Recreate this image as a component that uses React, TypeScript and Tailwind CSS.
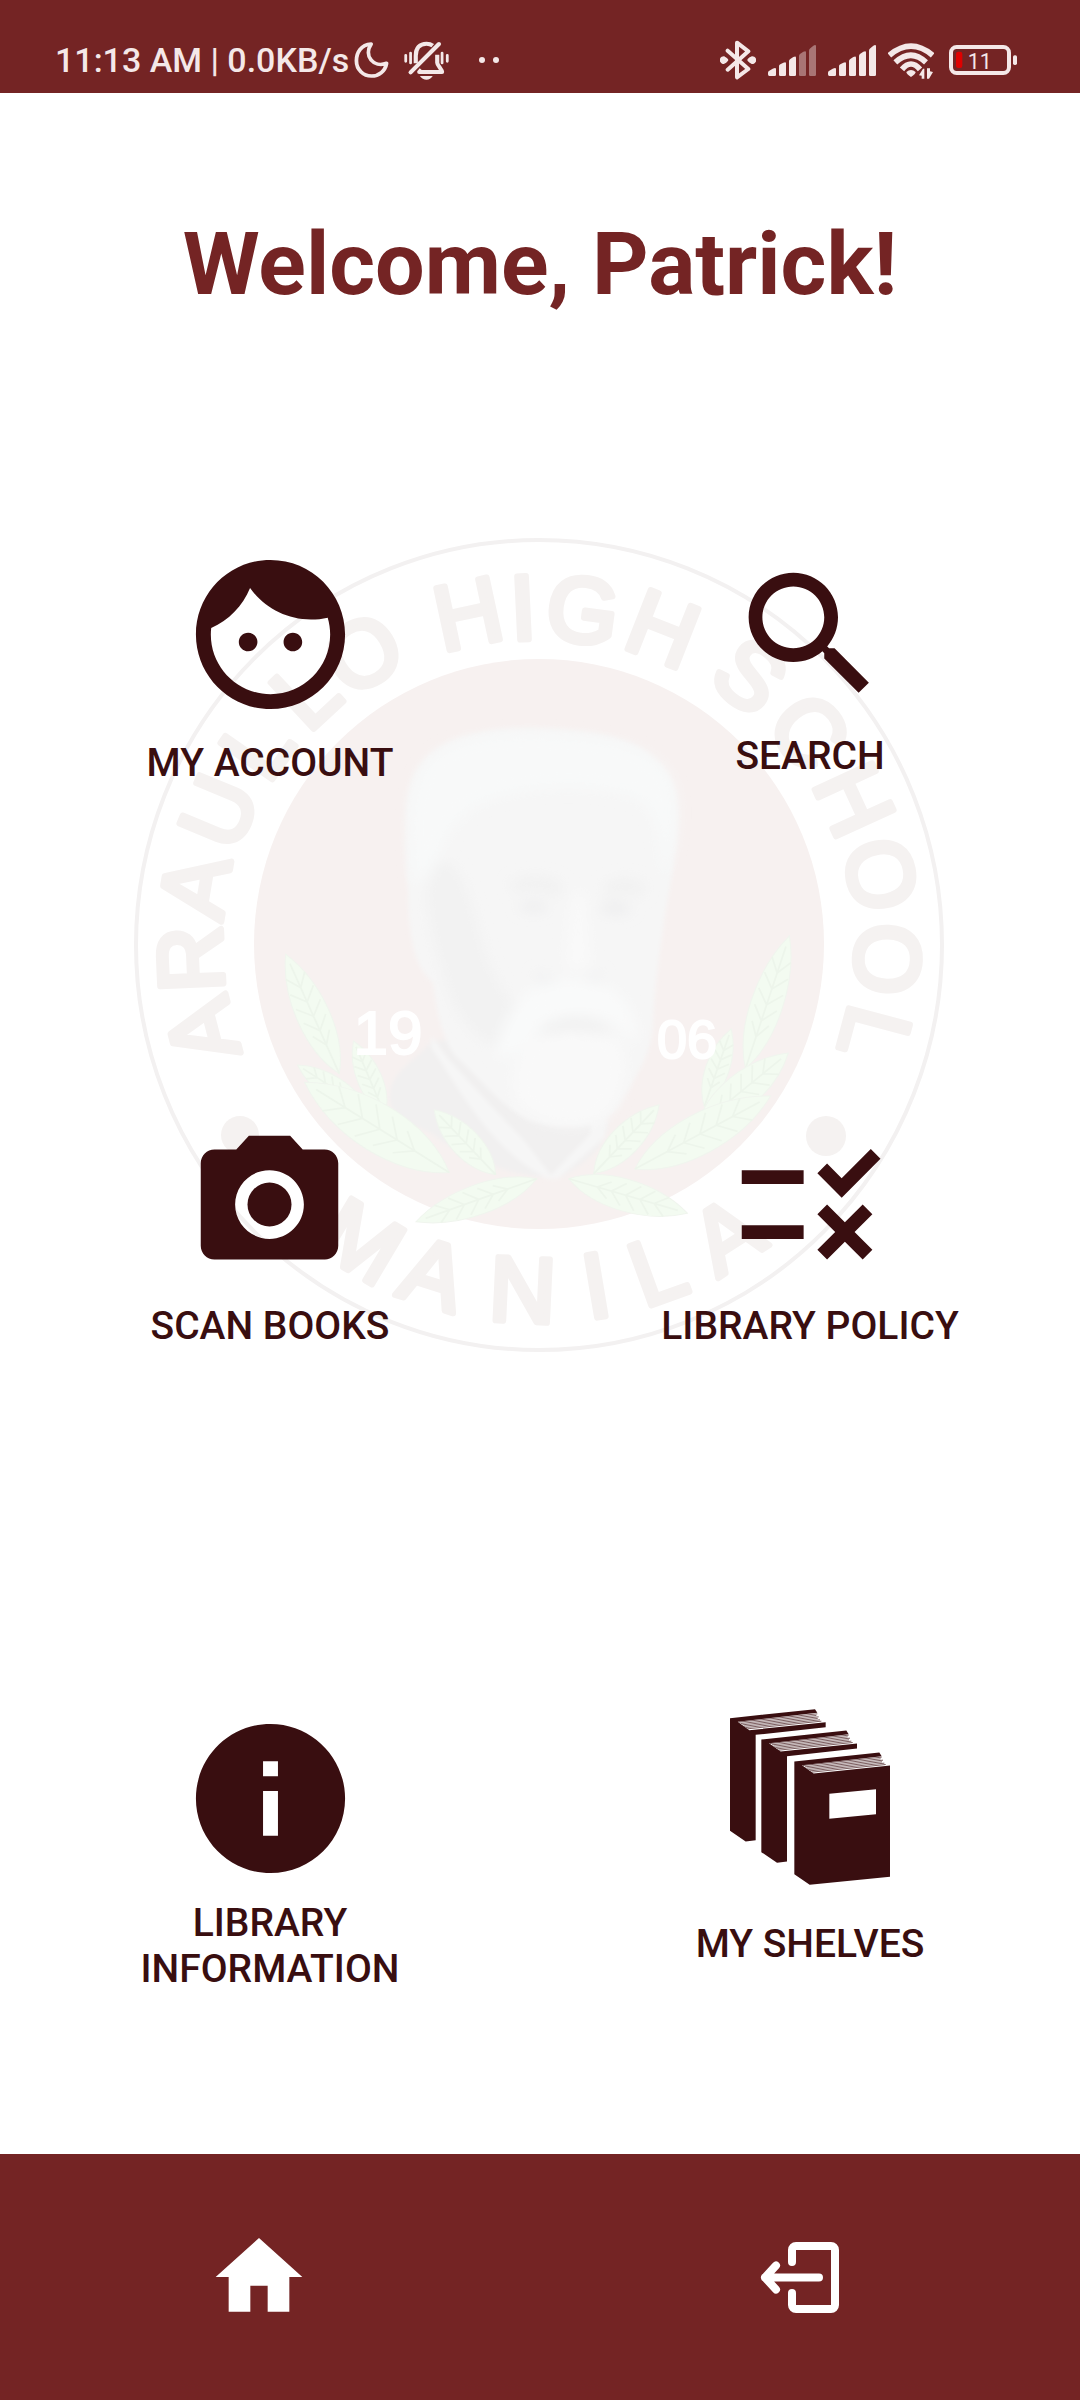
import type { ReactNode } from "react";

type IconProps = { className?: string };

/* ---------- Status bar ---------- */

function MoonIcon() {
  return (
    <svg className="h-10 w-[37px]" viewBox="1027 120 108 120" preserveAspectRatio="none" fill="none" stroke="currentColor" strokeWidth="11" strokeLinejoin="round" aria-hidden="true">
      <path d="M1080 132C1050 134 1037 158 1037 182c0 27 20 46 44 46 22 0 40-15 44-38-38 14-68-22-45-58z" />
    </svg>
  );
}

function MutedBellIcon() {
  return (
    <svg className="h-10 w-[45px]" viewBox="1175 120 130 120" preserveAspectRatio="none" fill="none" stroke="currentColor" aria-hidden="true">
      <path strokeWidth="12" d="M1209 190v-23c0-24 12-36 31-36 7 0 13 2 18 6M1271 164v24c0 8 14 20 14 28h-66l6-7" strokeLinejoin="round" />
      <path strokeWidth="12" strokeLinecap="round" d="M1194 217l82-85" />
      <path strokeWidth="8" strokeLinecap="round" d="M1180 166v18M1194 159v30M1285 159v30M1300 166v18" />
      <path fill="currentColor" stroke="none" d="M1221 228h37c-4 7-11 11-18 11s-15-4-19-11z" />
    </svg>
  );
}

function BluetoothIcon() {
  return (
    <svg className="h-10 w-9" viewBox="174 120 108 120" fill="none" stroke="currentColor" aria-hidden="true">
      <path strokeWidth="12" strokeLinecap="round" strokeLinejoin="round" d="M197 152l62 55-34 25V128l34 26-62 55" />
      <path fill="currentColor" stroke="none" d="M185 169c4 0 14 8 14 11s-10 12-14 12-12-5-12-12 8-11 12-11zM271 169c4 0 12 4 12 11s-8 12-12 12-15-8-15-12 11-11 15-11z" />
    </svg>
  );
}

function SignalIcon({ level }: { level: number }) {
  const bars = [
    "M321 223v-5q0-4 4-6l10-6q10-5 10 1v18q0 3-4 3h-16q-4 0-4-5z",
    "M354 224v-26q0-3 4-5l9-5q8-4 8 2v34q0 4-4 4h-13q-4 0-4-4z",
    "M384 224v-41q0-3 4-6l9-6q8-4 8 2v51q0 4-4 4h-13q-4 0-4-4z",
    "M414 224v-57q0-3 4-6l9-6q8-4 8 2v67q0 4-4 4h-13q-4 0-4-4z",
    "M444 224v-72q0-4 4-7l9-8q8-5 8 2v85q0 4-4 4h-13q-4 0-4-4z",
  ];
  return (
    <svg className="h-10 w-12" viewBox="321 120 144 120" fill="currentColor" aria-hidden="true">
      {bars.map((d, i) => (
        <path key={d} d={d} opacity={i < level ? 1 : 0.42} />
      ))}
    </svg>
  );
}

function WifiIcon() {
  return (
    <svg className="h-10 w-[46px]" viewBox="684 120 138 120" fill="none" stroke="currentColor" strokeWidth="17" aria-hidden="true">
      <path d="M688 166q65-55 130 0M706 187q47-43 92 0M726 208q27-32 54 0" />
      <path fill="currentColor" stroke="none" d="M739 216q14-12 28 0 0 6-14 15-14-9-14-15zM785 236v-9l-8-1 12-20h4v30zM801 205h9v9l9 2-12 20h-6z" />
    </svg>
  );
}

function BatteryIcon() {
  return (
    <svg className="h-10 w-[68px]" viewBox="867 120 204 120" role="img" aria-label="Battery 11%">
      <rect x="873" y="141" width="174" height="78" rx="17" fill="none" stroke="currentColor" strokeWidth="12" />
      <rect x="1059" y="166" width="12" height="29" rx="5" fill="currentColor" />
      <rect x="888" y="155" width="19" height="49" rx="7" fill="#df0000" />
      <text x="959" y="206" textAnchor="middle" fontSize="64" fill="currentColor">11</text>
    </svg>
  );
}

function StatusBar() {
  return (
    <header className="flex h-[93px] items-center justify-between bg-[#742424] pt-[27px] pr-[63px] pl-[55px] text-[#f4e8e8]">
      <div className="flex items-center">
        <span className="text-[34px] leading-10 font-medium whitespace-nowrap">11:13 AM | 0.0KB/s</span>
        <span className="ml-1 flex items-center gap-3.5">
          <MoonIcon />
          <MutedBellIcon />
        </span>
        <span className="ml-[30px] flex gap-2">
          <i className="size-1.5 rounded-full bg-current" />
          <i className="size-1.5 rounded-full bg-current" />
        </span>
      </div>
      <div className="flex items-center gap-[15px]">
        <div className="flex items-center gap-3">
          <BluetoothIcon />
          <SignalIcon level={3} />
          <SignalIcon level={5} />
          <WifiIcon />
        </div>
        <BatteryIcon />
      </div>
    </header>
  );
}

/* ---------- School seal watermark ---------- */

const topLetters: [string, number][] = [
  ["A", -104.5], ["R", -92.5], ["A", -80.5], ["U", -67.5], ["L", -55], ["L", -43], ["O", -31.2],
  ["H", -12.1], ["I", -2.7], ["G", 7.5], ["H", 21.5],
  ["S", 38.2], ["C", 51.8], ["H", 65.4], ["O", 78.5], ["O", 92.5], ["L", 105],
];

const bottomLetters: [string, number][] = [
  ["M", 30.8], ["A", 17.7], ["N", 2.7], ["I", -9.5], ["L", -20], ["A", -32.8],
];

/* The lettering ring is slightly wider than it is tall. */
const ringSpread = (angle: number) => Math.round(12 * Math.sin((angle * Math.PI) / 180) ** 2);

/* Tip x, tip y, base x, base y, half width */
const leaves: [number, number, number, number, number][] = [
  [72, 738, 222, 1085, 62],
  [262, 990, 350, 1205, 46],
  [105, 1060, 300, 1190, 44],
  [125, 1110, 530, 1372, 92],
  [488, 1190, 660, 1378, 54],
  [437, 1515, 775, 1390, 58],
  [1483, 685, 1360, 1070, 60],
  [1320, 955, 1245, 1180, 44],
  [1480, 1025, 1225, 1240, 66],
  [1430, 1150, 1050, 1362, 78],
  [1118, 1175, 935, 1375, 56],
  [1197, 1490, 865, 1390, 62],
];

function Leaf({ leaf }: { leaf: [number, number, number, number, number] }) {
  const [tx, ty, bx, by, w] = leaf;
  const dx = bx - tx;
  const dy = by - ty;
  const len = Math.hypot(dx, dy);
  const angle = (Math.atan2(dy, dx) * 180) / Math.PI;
  const veins = [0.28, 0.4, 0.52, 0.64, 0.76].map((t) => {
    const x = t * len;
    const v = w * 0.6 * Math.sin(Math.PI * Math.min(t, 0.8));
    return `M${x} 0l${-len * 0.1} ${-v}M${x} 0l${-len * 0.1} ${v}`;
  });
  return (
    <g transform={`translate(${tx} ${ty}) rotate(${angle})`}>
      <path d={`M0 0C${len * 0.3} ${-w} ${len * 0.75} ${-w} ${len} 0C${len * 0.75} ${w} ${len * 0.3} ${w} 0 0z`} fill="#f3fbf1" stroke="#f0f5ee" strokeWidth="3" />
      <path d={`M${len * 0.08} 0H${len}${veins.join("")}`} fill="none" stroke="#edf5eb" strokeWidth="5" />
    </g>
  );
}

function SchoolSeal({ className }: IconProps) {
  return (
    <svg className={className} viewBox="130 535 820 820" aria-hidden="true">
      <defs>
        <filter id="soft" x="-20%" y="-20%" width="140%" height="140%">
          <feGaussianBlur stdDeviation="18" />
        </filter>
        <filter id="edge" x="-10%" y="-10%" width="120%" height="120%">
          <feGaussianBlur stdDeviation="6" />
        </filter>
      </defs>
      <ellipse cx="539" cy="945" rx="403" ry="405" fill="none" stroke="#f3f1f1" strokeWidth="4" />
      <circle cx="539" cy="944" r="285" fill="#f7f1f0" />
      <g fill="#f5f2f1" stroke="#f5f2f1" strokeWidth="6" strokeLinejoin="round" fontFamily="'Liberation Sans', Arial, sans-serif" fontSize="92" textAnchor="middle">
        {topLetters.map(([letter, angle], i) => (
          <text key={i} transform={`rotate(${angle} 539 944)`} x="539" y={639 - ringSpread(angle)}>{letter}</text>
        ))}
        {bottomLetters.map(([letter, angle], i) => (
          <text key={i} transform={`rotate(${angle} 539 944)`} x="539" y="1322">{letter}</text>
        ))}
      </g>
      <circle cx="240" cy="1135" r="19" fill="#f5f2f1" />
      <circle cx="826" cy="1136" r="20" fill="#f5f2f1" />

      <g transform="translate(260 700) scale(0.357 0.3444)">
        <g filter="url(#edge)">
          <path d="M480 990C440 1050 350 1080 365 1170c20 80 90 60 130 100 90 60 180 100 290 115h60c60-40 140-90 130-180l40-250z" fill="#f1f0f0" />
          <path d="M790 83C640 78 500 100 440 200 395 270 405 430 415 560c0 110 15 220 70 260 10 90 30 190 80 230 60 60 110 130 190 170 80 30 200 30 250-40 30-60 90-140 95-230 5-120 20-220 35-330 25-150 60-310 10-400C1080 110 960 90 790 83z" fill="#f6f6f6" />
          <path d="M480 975l45 65 115 130 100 110 75 100 110-120 10-70 40 20-10 60-130 120h-30C640 1300 560 1130 480 1010z" fill="#f6f6f6" />
        </g>
        <g filter="url(#soft)">
          <path d="M790 100C620 95 500 120 450 210c-40 80-30 200-20 320l60-20c20-120 70-200 180-230 150-40 300-30 400 10 50 60 50 130 60 230 40-120 50-240 10-310C1080 130 960 105 790 100z" fill="#f8f9f9" />
          <path d="M490 480c70-60 110 140 140 250s90 160 120 180l-40 100c-60 20-150-60-180-160-40-130-90-280-40-370z" fill="#f2f2f2" />
          <path d="M700 530c60-30 120-20 150 10l-10 30c-50-20-90-20-130-10zM960 540c40-30 90-30 120 0l-10 30c-40-15-70-10-100 0z" fill="#f1f1f1" />
          <path d="M720 600q50-30 90 0-40 30-90 0zM945 605q50-35 100 0-45 35-100 0z" fill="#ededee" />
          <path d="M875 560h35l15 220h-70z" fill="#f9f9f9" />
          <path d="M770 790q100 50 190 0l-10 25q-80 30-170 5z" fill="#eeeeef" />
          <path d="M760 840c60-40 180-40 240 10 40 40 70 110 50 150-30-40-60-70-110-80-80-15-130 0-170 50-40 50-80 80-110 60 10-80 50-150 100-190z" fill="#f9fafa" />
          <path d="M740 1010c40-60 120-60 260-30 50 80 10 200-50 240-90 30-170 10-230-50-20-60-10-110 20-160z" fill="#f9f9f9" />
          <path d="M790 950q90-50 180-5l10 25q-100-25-200 5z" fill="#f0f0f0" />
        </g>
        {leaves.map((leaf, i) => (
          <Leaf key={i} leaf={leaf} />
        ))}
      </g>
      <g fill="#ffffff" stroke="#ffffff" strokeWidth="2" fontFamily="'Liberation Sans', Arial, sans-serif" textAnchor="middle">
        <text x="388" y="1054" fontSize="62">19</text>
        <text x="687" y="1058" fontSize="54">06</text>
      </g>
    </svg>
  );
}

/* ---------- Menu icons ---------- */

function FaceIcon() {
  return (
    <svg className="size-[179px]" viewBox="0 0 24 24" fill="currentColor" aria-hidden="true">
      <path d="M9 11.75c-.69 0-1.25.56-1.25 1.25s.56 1.25 1.25 1.25 1.25-.56 1.25-1.25-.56-1.25-1.25-1.25zm6 0c-.69 0-1.25.56-1.25 1.25s.56 1.25 1.25 1.25 1.25-.56 1.25-1.25-.56-1.25-1.25-1.25zM12 2C6.48 2 2 6.48 2 12s4.48 10 10 10 10-4.48 10-10S17.52 2 12 2zm0 18c-4.41 0-8-3.59-8-8 0-.29.02-.58.05-.86 2.36-1.05 4.23-2.98 5.21-5.37C11.07 8.33 14.05 10 17.42 10c.78 0 1.53-.09 2.25-.26.21.71.33 1.47.33 2.26 0 4.41-3.59 8-8 8z" />
    </svg>
  );
}

function SearchIcon() {
  return (
    <svg className="size-[165px]" viewBox="0 0 24 24" fill="currentColor" aria-hidden="true">
      <path d="M15.5 14h-.79l-.28-.27C15.41 12.59 16 11.11 16 9.5 16 5.91 13.09 3 9.5 3S3 5.91 3 9.5 5.91 16 9.5 16c1.61 0 3.09-.59 4.23-1.57l.27.28v.79l5 4.99L20.49 19l-4.99-5zm-6 0C7.01 14 5 11.99 5 9.5S7.01 5 9.5 5 14 7.01 14 9.5 11.99 14 9.5 14z" />
    </svg>
  );
}

function CameraIcon() {
  return (
    <svg className="size-[165px]" viewBox="0 0 24 24" fill="currentColor" aria-hidden="true">
      <circle cx="12" cy="12" r="3.2" />
      <path d="M9 2L7.17 4H4c-1.1 0-2 .9-2 2v12c0 1.1.9 2 2 2h16c1.1 0 2-.9 2-2V6c0-1.1-.9-2-2-2h-3.17L15 2H9zm3 15c-2.76 0-5-2.24-5-5s2.24-5 5-5 5 2.24 5 5-2.24 5-5 5z" />
    </svg>
  );
}

function RuleIcon() {
  return (
    <svg className="size-[165px]" viewBox="0 0 24 24" fill="currentColor" aria-hidden="true">
      <path d="M16.54 11L13 7.46l1.41-1.41 2.12 2.12 4.24-4.24 1.41 1.41L16.54 11zM11 7H2v2h9V7zm10 6.41L19.59 12 17 14.59 14.41 12 13 13.41 15.59 16 13 18.59 14.41 20 17 17.41 19.59 20 21 18.59 18.41 16 21 13.41zM11 15H2v2h9v-2z" />
    </svg>
  );
}

function InfoIcon() {
  return (
    <svg className="size-[179px]" viewBox="0 0 24 24" fill="currentColor" aria-hidden="true">
      <path d="M12 2C6.48 2 2 6.48 2 12s4.48 10 10 10 10-4.48 10-10S17.52 2 12 2zm1 15h-2v-6h2v6zm0-8h-2V7h2v2z" />
    </svg>
  );
}

const pageEdges =
  "M116 96L352 71M122 100L349 76M127 104L356 80M132 108L353 85M137 112L360 89M142 116L364 93";

function BooksIcon() {
  const backBook = "M90 84L345 57l7 11L113 95l35 25 229-24v15l-210 23v316l-30 4-47-32z";
  return (
    <svg className="h-44 w-40" viewBox="90 57 480 527" fill="currentColor" aria-hidden="true">
      <path d={backBook} />
      <path d={pageEdges} stroke="currentColor" strokeWidth="2" />
      <g transform="translate(94 64)">
        <path d={backBook} />
        <path d={pageEdges} stroke="currentColor" strokeWidth="2" />
      </g>
      <g transform="translate(193 130)">
        <path fillRule="evenodd" d="M90 84L345 57l7 11L113 95l35 25 229-24v334l-241 24-46-32zM195 181v75l140-14v-75z" />
        <path d={pageEdges} stroke="currentColor" strokeWidth="2" />
      </g>
    </svg>
  );
}

/* ---------- Page ---------- */

function MenuItem({ icon, label, gap = "gap-4" }: { icon: ReactNode; label: string; gap?: string }) {
  return (
    <button type="button" className={`flex max-w-[320px] flex-col items-center justify-self-center ${gap}`}>
      {icon}
      <span className="text-[39px] leading-[46px] font-medium">{label}</span>
    </button>
  );
}

export default function App() {
  return (
    <div className="flex min-h-screen flex-col bg-white font-['Roboto',sans-serif]">
      <StatusBar />
      <main className="relative flex-1 pt-[119px] pb-10 text-[#390e10]">
        <SchoolSeal className="pointer-events-none absolute top-[442px] left-1/2 w-[820px] -translate-x-1/2" />
        <div className="relative">
          <h1 className="text-center text-[88px] leading-[103px] font-bold text-[#742424]">Welcome, Patrick!</h1>
          <nav aria-label="Library menu" className="mt-[230px]">
            <div className="grid grid-cols-2 items-center">
              <MenuItem icon={<FaceIcon />} label="MY ACCOUNT" />
              <MenuItem icon={<SearchIcon />} label="SEARCH" />
            </div>
            <div className="mt-[336px] grid grid-cols-2 items-center">
              <MenuItem icon={<CameraIcon />} label="SCAN BOOKS" />
              <MenuItem icon={<RuleIcon />} label="LIBRARY POLICY" />
            </div>
            <div className="mt-[360px] grid grid-cols-2 items-start">
              <MenuItem icon={<InfoIcon />} label="LIBRARY INFORMATION" gap="gap-3" />
              <MenuItem icon={<BooksIcon />} label="MY SHELVES" gap="gap-9" />
            </div>
          </nav>
        </div>
      </main>
      <footer className="grid h-[246px] grid-cols-2 items-center bg-[#742424] text-white">
        <button type="button" aria-label="Home" className="mr-[22px] justify-self-center">
          <svg className="size-[104px]" viewBox="0 0 24 24" fill="currentColor" aria-hidden="true">
            <path d="M10 20v-6h4v6h5v-8h3L12 3 2 12h3v8z" />
          </svg>
        </button>
        <button type="button" aria-label="Log out" className="mr-[22px] justify-self-center">
          <svg className="h-[71px] w-[79px]" viewBox="0 0 79 71" fill="none" stroke="currentColor" strokeWidth="8" strokeLinecap="round" strokeLinejoin="round" aria-hidden="true">
            <path d="M32 20V8a4 4 0 0 1 4-4h35a4 4 0 0 1 4 4v55a4 4 0 0 1-4 4H36a4 4 0 0 1-4-4V51" />
            <path d="M59 35.5H5M16 23.5l-11 12 11 12" />
          </svg>
        </button>
      </footer>
    </div>
  );
}
